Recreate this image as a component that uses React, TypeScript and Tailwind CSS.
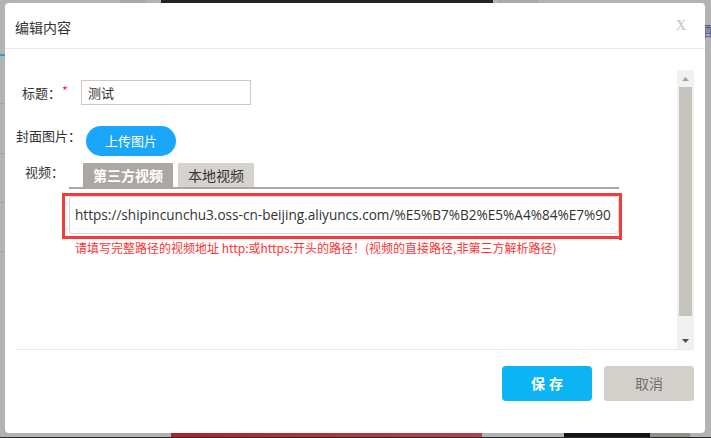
import React from "react";

const cjk = { fontFamily: '"Noto Sans CJK SC", "Noto Sans", sans-serif' };

export default function App() {
  return (
    <div className="relative w-[711px] h-[438px] overflow-hidden bg-[#b3b3b3]" style={cjk}>
      {/* background fragments */}
      <div className="absolute top-0 left-[120px] w-[25px] h-[3px] bg-[#a8a8a8]" />
      <div className="absolute top-0 left-[161px] w-[332px] h-[3px] bg-[#232323]" />
      <div className="absolute top-0 left-[498px] w-[40px] h-[3px] bg-[#a9a9a9]" />
      <div className="absolute bottom-0 left-[171px] w-[311px] h-[5px] bg-gradient-to-r from-[#b01f2c] to-[#b4434f]" />
      <div className="absolute bottom-0 left-[564px] w-[86px] h-[5px] bg-[#151515]" />
      <div className="absolute bottom-0 left-[650px] w-[40px] h-[5px] bg-[#8f8f8c]" />
      <div className="absolute bottom-0 left-0 w-full h-[1px] bg-[#2a2a2a]" />
      <div className="absolute left-0 top-[54px] w-[5px] h-[2px] bg-[#1fa3e0]" />
      <div className="absolute left-0 top-[103px] w-[5px] h-[1px] bg-[#a4a4a4]" />
      <div className="absolute left-0 top-[153px] w-[5px] h-[1px] bg-[#a4a4a4]" />
      <div className="absolute left-0 top-[202px] w-[5px] h-[1px] bg-[#a4a4a4]" />
      <div className="absolute left-0 top-[251px] w-[5px] h-[1px] bg-[#a4a4a4]" />
      <div className="absolute left-[704px] top-[22px] text-[14px] leading-[16px] text-[#4a5a8a]">配</div>

      {/* dialog */}
      <div className="absolute left-[5px] top-[3px] w-[700px] h-[430px] rounded-[4px] bg-white flex flex-col">
        <div className="h-[46px] border-b border-[#e8e8e8] flex items-center justify-between pl-[10px] pr-[19px]">
          <span className="text-[14px] text-[#333] leading-[18px] mt-[2px]">编辑内容</span>
          <span
            className="text-[14px] font-bold text-[#cccccc] leading-[14px] mt-[1px]"
            style={{ fontFamily: '"Liberation Serif", serif' }}
          >
            X
          </span>
        </div>

        <div className="px-[11px] pt-[21px]">
          <div className="h-[280px] flex border-b border-[#e8e8e8]">
            <div className="flex-1 text-[13px] text-[#333]">
              {/* title row */}
              <div className="mt-[10px] h-[25px] flex items-center">
                <div className="w-[65px] pl-[6px] flex items-center">
                  <span className="leading-[18px]">标题：</span>
                  <span className="text-[#f33] leading-[18px] -mt-[4px] ml-[1px]">*</span>
                </div>
                <div className="w-[170px] h-[25px] border border-[#ccc8c2] flex items-center pl-[6px] leading-[18px]">
                  测试
                </div>
              </div>

              {/* cover row */}
              <div className="mt-[21px] h-[30px] flex">
                <div className="w-[70px] leading-[18px] pt-[1px]">封面图片：</div>
                <div className="w-[90px] h-[30px] rounded-full bg-[#1aa6f9] text-white flex items-center justify-center text-[13px]">
                  上传图片
                </div>
              </div>

              {/* video row */}
              <div className="mt-[7px] h-[24px] flex">
                <div className="w-[67px] pl-[9px] leading-[18px]">视频：</div>
                <div className="w-[90px] h-[24px] bg-[#aca7a2] text-white font-bold text-[14px] flex items-center justify-center">
                  第三方视频
                </div>
                <div className="ml-[5px] w-[76px] h-[24px] bg-[#d6d3ce] text-[#333] text-[14px] flex items-center justify-center">
                  本地视频
                </div>
              </div>
              <div className="ml-[53px] w-[550px] h-[2px] bg-[#aca7a2]" />

              <div className="mt-[4px] ml-[46px] w-[560px] h-[46px] border-[3px] border-[#f43a3a] relative">
                <div className="absolute -right-[3px] top-full w-[3px] h-[4px] bg-[#f43a3a]" />
                <div
                  className="ml-[4px] h-[38px] border border-[#d6d6d6] rounded-[3px] flex items-center pl-[5px] text-[13.6px] text-[#333] whitespace-nowrap overflow-hidden"
                  style={{ fontFamily: '"Open Sans", "Noto Sans", sans-serif' }}
                >
                  https://shipincunchu3.oss-cn-beijing.aliyuncs.com/%E5%B7%B2%E5%A4%84%E7%90
                </div>
              </div>
              <div className="mt-[1px] ml-[59px] text-[12px] leading-[16px] text-[#f33] whitespace-nowrap">
                请填写完整路径的视频地址 http:或https:开头的路径！(视频的直接路径,非第三方解析路径)
              </div>
            </div>

            {/* scrollbar */}
            <div className="w-[17px] bg-[#f1f1f1] flex flex-col items-center">
              <div className="h-[17px] flex items-center justify-center">
                <svg width="7" height="4" viewBox="0 0 7 4">
                  <path d="M0 4 L3.5 0 L7 4 Z" fill="#a3a3a3" />
                </svg>
              </div>
              <div className="w-[13px] h-[229px] bg-[#c6c3bd]" />
              <div className="flex-1" />
              <div className="h-[17px] flex items-center justify-center">
                <svg width="7" height="4" viewBox="0 0 7 4">
                  <path d="M0 0 L7 0 L3.5 4 Z" fill="#505050" />
                </svg>
              </div>
            </div>
          </div>
        </div>

        <div className="flex justify-end gap-[12px] pr-[11px] pt-[16px]">
          <div className="w-[90px] h-[35px] rounded-[4px] bg-[#0cb4f3] text-white font-bold text-[14px] flex items-center justify-center tracking-[4px] pl-[4px]">
            保存
          </div>
          <div className="w-[90px] h-[35px] rounded-[3px] bg-[#d3d0cb] text-[#6f6f6f] text-[14px] flex items-center justify-center">
            取消
          </div>
        </div>
      </div>
    </div>
  );
}
